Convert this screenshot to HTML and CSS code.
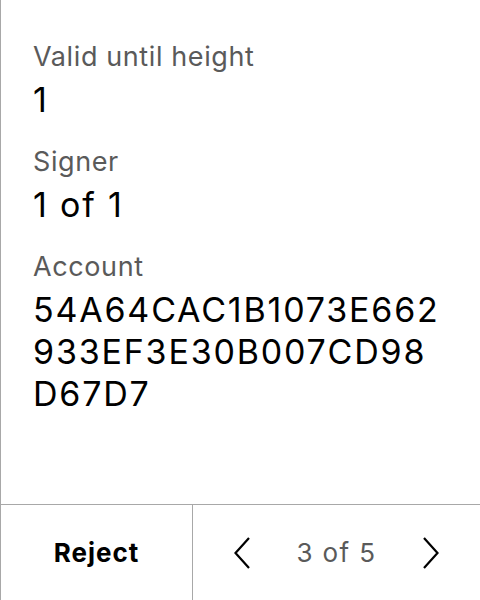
FILE: index.html
```html
<!DOCTYPE html>
<html>
<head>
<meta charset="utf-8">
<link rel="stylesheet" href="styles.css">
</head>
<body>
<div class="screen">
  <main class="content">
    <div class="field">
      <div class="label">Valid until height</div>
      <div class="value">1</div>
    </div>
    <div class="field">
      <div class="label">Signer</div>
      <div class="value">1 of 1</div>
    </div>
    <div class="field">
      <div class="label">Account</div>
      <div class="value">54A64CAC1B1073E662<br>933EF3E30B007CD98<br>D67D7</div>
    </div>
  </main>
  <footer class="footer">
    <div class="reject">Reject</div>
    <div class="pager">
      <svg class="chev" width="16" height="32" viewBox="0 0 16 32"><path d="M15 1 L1.5 16 L15 31" fill="none" stroke="#000" stroke-width="2.2"/></svg>
      <span class="count">3 of 5</span>
      <svg class="chev" width="16" height="32" viewBox="0 0 16 32"><path d="M1 1 L14.5 16 L1 31" fill="none" stroke="#000" stroke-width="2.2"/></svg>
    </div>
  </footer>
</div>
</body>
</html>
```

FILE: styles.css
```css
html, body {
  margin: 0;
  padding: 0;
  background: #fff;
}
body {
  font-family: Inter, "Noto Sans", sans-serif;
  color: #000;
}
.screen {
  width: 480px;
  height: 600px;
  box-sizing: border-box;
  border-left: 1px solid #a8a8a8;
  display: flex;
  flex-direction: column;
}
.content {
  height: 504px;
  box-sizing: border-box;
  padding: 40px 0 0 32px;
  display: flex;
  flex-direction: column;
  gap: 24px;
}
.field {
  display: flex;
  flex-direction: column;
  gap: 6px;
}
.label {
  font-size: 27px;
  line-height: 33px;
  letter-spacing: 0.6px;
  color: #5a5a5a;
}
.value {
  font-size: 34px;
  line-height: 42px;
  letter-spacing: 1.8px;
  color: #000;
}
.footer {
  height: 96px;
  box-sizing: border-box;
  border-top: 1px solid #a8a8a8;
  display: flex;
}
.reject {
  width: 191px;
  border-right: 1px solid #a8a8a8;
  display: flex;
  align-items: center;
  justify-content: center;
  font-size: 26px;
  font-weight: 700;
  letter-spacing: 1px;
}
.pager {
  flex: 1;
  display: flex;
  align-items: center;
  justify-content: center;
  gap: 46px;
}
.count {
  font-size: 26px;
  letter-spacing: 1.4px;
  color: #5a5a5a;
}
```
